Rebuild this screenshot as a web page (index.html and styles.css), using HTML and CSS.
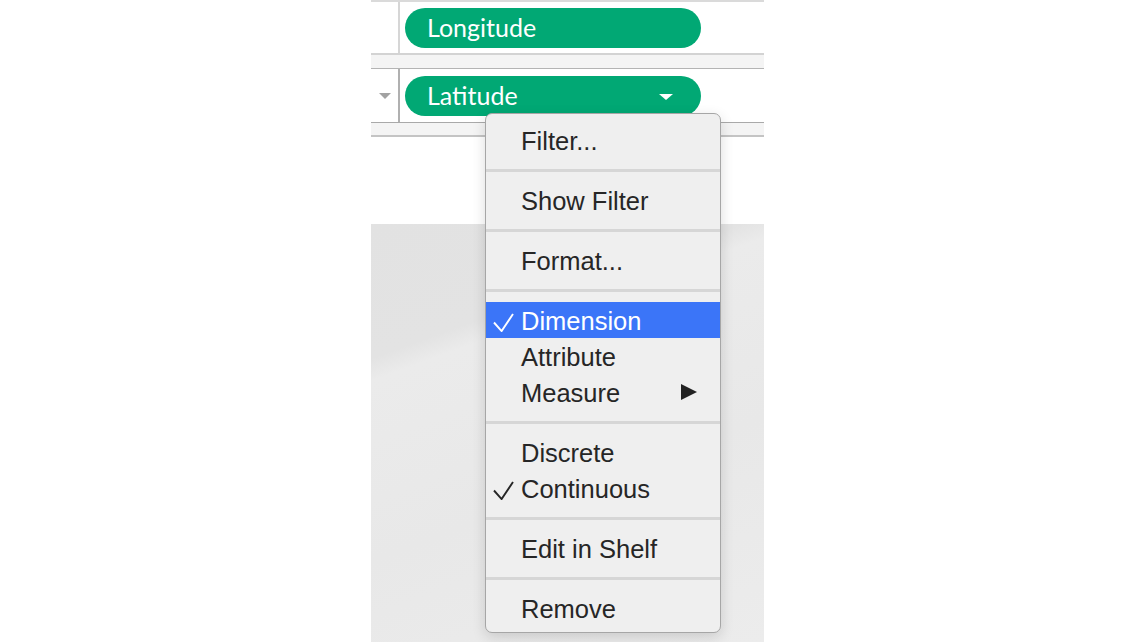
FILE: index.html
```html
<!DOCTYPE html>
<html lang="en">
<head>
    <meta charset="UTF-8">
    <title>Shelf Menu</title>
    <link rel="stylesheet" href="styles.css">
</head>
<body>

    <div class="stage">
        <!-- Shelf rows -->
        <div class="shelf">
            <div class="shelf-row first">
                <div class="row-handle"></div>
                <div class="row-body">
                    <div class="pill">Longitude</div>
                </div>
            </div>
            <div class="shelf-gap"></div>
            <div class="shelf-row second">
                <div class="row-handle">
                    <span class="handle-arrow"></span>
                </div>
                <div class="row-body">
                    <div class="pill">
                        <span>Latitude</span>
                        <span class="pill-arrow"></span>
                    </div>
                </div>
            </div>
            <div class="shelf-gap last"></div>
        </div>

        <!-- Map background -->
        <div class="map"></div>

        <!-- Context menu for the Latitude pill -->
        <div class="menu">
            <div class="menu-group top">
                <div class="menu-item">Filter...</div>
            </div>
            <div class="menu-group">
                <div class="menu-item">Show Filter</div>
            </div>
            <div class="menu-group">
                <div class="menu-item">Format...</div>
            </div>
            <div class="menu-group">
                <div class="menu-item active">
                    <svg class="check" viewBox="0 0 22 20"><polyline points="1,10 9,19 21,1"/></svg>
                    Dimension
                </div>
                <div class="menu-item">Attribute</div>
                <div class="menu-item">
                    Measure
                    <span class="submenu-arrow"></span>
                </div>
            </div>
            <div class="menu-group">
                <div class="menu-item">Discrete</div>
                <div class="menu-item">
                    <svg class="check" viewBox="0 0 22 20"><polyline points="1,10 9,19 21,1"/></svg>
                    Continuous
                </div>
            </div>
            <div class="menu-group">
                <div class="menu-item">Edit in Shelf</div>
            </div>
            <div class="menu-group bottom">
                <div class="menu-item">Remove</div>
            </div>
        </div>
    </div>

</body>
</html>
```

FILE: styles.css
```css
body {
    margin: 0;
    padding: 0;
    background-color: white;
    font-family: 'Liberation Sans', Arial, sans-serif;
}

.stage {
    position: relative;
    width: 393px;
    height: 642px;
    margin-left: 371px;
    overflow: hidden;
}

/* Shelf area */
.shelf {
    height: 224px;
    background-color: white;
    border-top: 2px solid #dadada;
    box-sizing: border-box;
}

.shelf-row {
    display: flex;
    height: 51px;
}

.shelf-row.first {
    border-bottom: 2px solid #d3d3d3;
}

.shelf-row.second {
    height: 53px;
    border-top: 1px solid #b4b4b4;
    border-bottom: 1px solid #a9a9a9;
}

.shelf-gap {
    height: 13px;
    background-color: #f4f4f4;
}

.shelf-gap.last {
    height: 12px;
    border-bottom: 2px solid #c4c4c4;
}

.row-handle {
    width: 27px;
    border-right: 2px solid #d6d6d6;
    display: flex;
    align-items: center;
    justify-content: center;
}

.second .row-handle {
    border-right-color: #b0b0b0;
}

.handle-arrow {
    width: 0;
    height: 0;
    border-left: 6px solid transparent;
    border-right: 6px solid transparent;
    border-top: 6px solid #a2a2a2;
    margin-top: 1px;
}

.row-body {
    flex: 1;
    display: flex;
    align-items: flex-start;
    padding-left: 5px;
}

.first .row-body {
    padding-top: 6px;
}

.second .row-body {
    padding-top: 7px;
}

.pill {
    width: 296px;
    height: 40px;
    box-sizing: border-box;
    padding: 0 22px 3px;
    border-radius: 20px;
    background-color: #01a874;
    color: white;
    font-family: Lato, 'Liberation Sans', sans-serif;
    font-size: 25px;
    line-height: 36px;
    display: flex;
    align-items: center;
    justify-content: space-between;
}

.pill-arrow {
    width: 0;
    height: 0;
    border-left: 7px solid transparent;
    border-right: 7px solid transparent;
    border-top: 6px solid white;
    margin-right: 6px;
    margin-top: 4px;
}

/* Map */
.map {
    height: 418px;
    background: linear-gradient(160deg, #e2e2e2 0%, #e3e3e3 24%, #ebebeb 28%, #e8e8e8 60%, #ececec 100%);
}

/* Context menu */
.menu {
    position: absolute;
    left: 114px;
    top: 113px;
    width: 236px;
    box-sizing: border-box;
    background-color: #efefef;
    border: 1px solid #a6a6a6;
    border-radius: 7px;
    box-shadow: 0 4px 14px rgba(0, 0, 0, 0.14);
    color: #262626;
    font-size: 25.5px;
}

.menu-group {
    padding: 10px 0 11px;
    border-bottom: 3px solid #d6d6d6;
}

.menu-group.top {
    padding-top: 8px;
}

.menu-group.bottom {
    border-bottom: none;
    padding-bottom: 6px;
}

.menu-item {
    position: relative;
    height: 36px;
    line-height: 39px;
    padding-left: 35px;
}

.menu-item.active {
    background-color: #3b75f8;
    color: white;
}

.check {
    position: absolute;
    left: 7px;
    top: 11px;
    width: 21px;
    height: 19px;
    fill: none;
    stroke: #262626;
    stroke-width: 2;
}

.active .check {
    stroke: white;
}

.submenu-arrow {
    position: absolute;
    right: 23px;
    top: 10px;
    width: 0;
    height: 0;
    border-top: 8px solid transparent;
    border-bottom: 8px solid transparent;
    border-left: 16px solid #222;
}
```
